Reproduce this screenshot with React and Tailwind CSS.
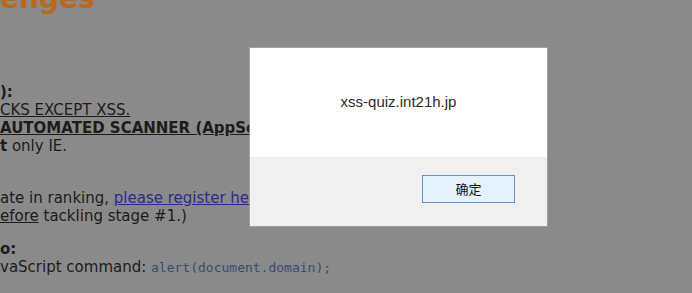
export default function App() {
  return (
    <div className="relative w-[692px] h-[293px] overflow-hidden bg-[#8a8a8a] font-['DejaVu_Sans',sans-serif] text-[15px] leading-[18px] text-[#1c1c1c]">
      {/* dimmed page behind the alert */}
      <div className="flex flex-col whitespace-nowrap">
        <div className="mt-[-15px] h-[28px] text-[28px] leading-[28px] font-bold text-[#b8691b]">enges</div>
        <div className="mt-[70px] font-bold">):</div>
        <div className="underline">CKS EXCEPT XSS.</div>
        <div className="font-bold underline">AUTOMATED SCANNER (AppScan etc.)</div>
        <div>
          <span className="font-bold">t</span> only IE.
        </div>
        <div className="mt-[34px]">
          ate in ranking, <span className="text-[#2c2c8a] underline">please register here</span>
        </div>
        <div>
          <span className="underline">efore</span> tackling stage #1.)
        </div>
        <div className="mt-[15px] font-bold">o:</div>
        <div>
          vaScript command:{' '}
          <span className="font-['DejaVu_Sans_Mono',monospace] text-[13px] text-[#3c4a72]">alert(document.domain);</span>
        </div>
      </div>

      {/* alert dialog */}
      <div className="absolute left-[250px] top-[48px] w-[297px] h-[178px] flex flex-col bg-white shadow-[0_0_0_1px_rgba(170,170,170,0.7)] font-['Liberation_Sans','Noto_Sans_CJK_SC',sans-serif]">
        <div className="h-[109px] flex items-start justify-center pt-[45px] text-[15px] leading-[18px] text-[#2a2a2a]">
          xss-quiz.int21h.jp
        </div>
        <div className="flex-1 flex justify-end items-start bg-[#f0f0f0] border-t border-[#ececec] pt-[17px] pr-[32px]">
          <button className="w-[93px] h-[28px] flex items-center justify-center bg-[#e5f1fb] border border-[#5f94c8] text-[13px] text-[#111] font-['Noto_Sans_CJK_SC',sans-serif]">
            确定
          </button>
        </div>
      </div>
    </div>
  );
}
